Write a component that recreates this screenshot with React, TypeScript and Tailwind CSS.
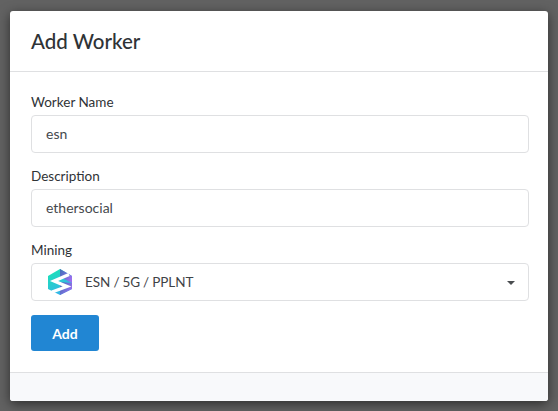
export default function App() {
  const font = { fontFamily: "Lato, sans-serif" };
  return (
    <div style={font} className="h-[411px] w-[558px] overflow-hidden bg-[#626262] pl-[10px] pt-[11px]">
      <div className="flex h-[390px] w-[538px] flex-col rounded-[3px] bg-white shadow-[0_3px_12px_rgba(0,0,0,0.55)]">
        <div className="flex h-[61px] shrink-0 items-center border-b border-[#dfe0e2] pl-[21px]">
          <h1 className="text-[20.5px] leading-none font-medium text-[#2f3336]">Add Worker</h1>
        </div>
        <div className="flex flex-1 flex-col pr-[19px] pl-[21px] pt-[22px]">
          <Field label="Worker Name" value="esn" />
          <Field label="Description" value="ethersocial" />
          <div className="flex h-[16px] items-center text-[13.5px] text-[#2f3336]">Mining</div>
          <div className="mt-[5px] flex h-[38px] items-center rounded-[4px] border border-[#dfe0e2] pr-[13px] pl-[14px]">
            <svg width="28" height="28" viewBox="0 0 28 28" className="shrink-0">
              <defs>
                <linearGradient id="l" x1="0" y1="0" x2="0.6" y2="1">
                  <stop offset="0" stopColor="#17e8b0" />
                  <stop offset="1" stopColor="#38b0ee" />
                </linearGradient>
                <linearGradient id="r" x1="0" y1="0" x2="1" y2="0.6">
                  <stop offset="0" stopColor="#3f6fb8" />
                  <stop offset="1" stopColor="#9a70ee" />
                </linearGradient>
              </defs>
              <polygon points="14,1 26,8 26,21 14,27 2,21 2,8" fill="url(#l)" />
              <polygon points="14,1 26,8 26,15 14,9" fill="url(#r)" />
              <polygon points="14,14 26,15 26,21 14,27" fill="url(#r)" />
              <path d="M23 6.5 L8 13 L21 18.5 L6 24" stroke="#fff" strokeWidth="3.2" fill="none" />
            </svg>
            <span className="ml-[11px] flex-1 text-[13.5px] [word-spacing:-0.5px] text-[#3f4347]">ESN / 5G / PPLNT</span>
            <span className="mt-[1px] h-0 w-0 border-x-[4px] border-t-[4px] border-x-transparent border-t-[#4a4d50]" />
          </div>
          <button className="mt-[14px] flex h-[36px] w-[68px] items-center justify-center rounded-[3px] bg-[#2186d3] text-[14px] font-bold text-white">
            Add
          </button>
        </div>
        <div className="h-[29px] shrink-0 rounded-b-[3px] border-t border-[#dfe0e2] bg-[#f8f9fb]" />
      </div>
    </div>
  );
}

function Field({ label, value }: { label: string; value: string }) {
  return (
    <div className="mb-[15px]">
      <div className="flex h-[16px] items-center text-[13.5px] text-[#2f3336]">{label}</div>
      <input
        readOnly
        value={value}
        className="mt-[5px] block h-[38px] w-full rounded-[4px] border border-[#dfe0e2] bg-white px-[14px] pb-[2px] text-[14px] text-[#45494d] outline-none"
      />
    </div>
  );
}
